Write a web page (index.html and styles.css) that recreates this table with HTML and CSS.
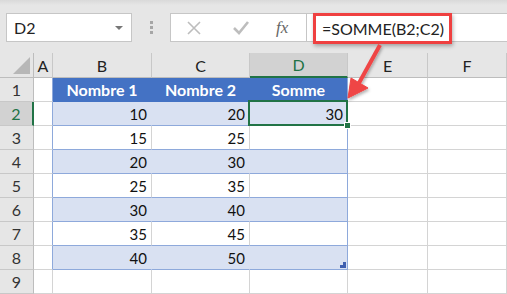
FILE: index.html
```html
<!DOCTYPE html>
<html lang="fr">

<head>
    <meta charset="UTF-8">
    <title>Somme</title>
    <link rel="stylesheet" href="styles.css">
</head>

<body>
    <div class="toolbar">
        <div class="name-box">
            <span>D2</span>
            <span class="drop"></span>
        </div>
        <div class="grip"><i></i><i></i><i></i></div>
        <div class="formula-bar">
            <div class="fx-buttons">
                <svg width="16" height="16" viewBox="0 0 16 16">
                    <path d="M2 2 L14 14 M14 2 L2 14" stroke="#bdbdbd" stroke-width="1.6" fill="none" />
                </svg>
                <svg width="18" height="16" viewBox="0 0 18 16">
                    <path d="M2 8 L7 13 L16 2" stroke="#bdbdbd" stroke-width="2.6" fill="none" />
                </svg>
                <span class="fx">fx</span>
            </div>
            <div class="formula">
                <span class="formula-text">=SOMME(B2;C2)</span>
            </div>
        </div>
    </div>

    <div id="sheet" class="sheet"></div>

    <svg class="arrow" width="507" height="294" viewBox="0 0 507 294">
        <defs>
            <filter id="shade" x="-20%" y="-20%" width="140%" height="140%">
                <feDropShadow dx="1" dy="2" stdDeviation="1.5" flood-color="#000" flood-opacity="0.3" />
            </filter>
        </defs>
        <g filter="url(#shade)" fill="#ef4545" stroke="#ef4545">
            <line x1="380" y1="45" x2="359" y2="83" stroke-width="4" />
            <polygon points="348,98 351,78 368,88" stroke-width="1" />
        </g>
    </svg>

    <script>
        const cols = ["", "A", "B", "C", "D", "E", "F"];
        const rows = [
            ["Nombre 1", "Nombre 2", "Somme"],
            [10, 20, 30],
            [15, 25, ""],
            [20, 30, ""],
            [25, 35, ""],
            [30, 40, ""],
            [35, 45, ""],
            [40, 50, ""],
            null
        ];
        const sheet = document.getElementById('sheet');

        function cell(text, cls) {
            const div = document.createElement("div");
            div.className = cls;
            div.textContent = text;
            sheet.append(div);
            return div;
        }

        cols.forEach((c, i) => {
            cell(c, i === 0 ? "corner" : (c === "D" ? "col-head active" : "col-head"));
        });

        rows.forEach((row, r) => {
            const n = r + 1;
            cell(n, n === 2 ? "row-head active" : "row-head");
            cell("", n <= 8 ? "cell col-a edge" : "cell col-a");
            for (let k = 0; k < 3; k++) {
                let cls = "cell";
                if (row) {
                    if (n === 1) cls += " tbl head";
                    else cls += n % 2 === 0 ? " tbl band" : " tbl";
                    if (k === 2) cls += " last";
                    if (n === 8) cls += " bottom";
                }
                const box = cell(row ? row[k] : "", cls);
                if (n === 2 && k === 2) box.classList.add("selected");
                if (n === 8 && k === 2) box.classList.add("resize");
            }
            cell("", "cell");
            cell("", "cell");
        });
    </script>
</body>

</html>
```

FILE: styles.css
```css
body {
    margin: 0;
    width: 507px;
    height: 294px;
    overflow: hidden;
    background-color: #fff;
    font-family: Lato, "Open Sans", sans-serif;
    position: relative;
}

.toolbar {
    height: 53px;
    box-sizing: border-box;
    padding: 13px 0 0 6px;
    display: flex;
    align-items: flex-start;
    background: linear-gradient(#d9d9d9, #e6e6e6 5px);
}

.name-box {
    width: 126px;
    height: 29px;
    box-sizing: border-box;
    background-color: #fff;
    border: 1px solid #c6c6c6;
    display: flex;
    align-items: center;
    justify-content: space-between;
    padding: 0 8px 0 7px;
    font-size: 16px;
    color: #222;
}

.drop {
    width: 0;
    height: 0;
    border-left: 4px solid transparent;
    border-right: 4px solid transparent;
    border-top: 4px solid #777;
}

.grip {
    width: 38px;
    height: 29px;
    display: flex;
    flex-direction: column;
    align-items: center;
    justify-content: center;
    gap: 2px;
}

.grip i {
    width: 3px;
    height: 3px;
    background-color: #a6a6a6;
}

.formula-bar {
    flex: 1;
    height: 29px;
    display: flex;
}

.fx-buttons {
    width: 137px;
    box-sizing: border-box;
    background-color: #fff;
    border: 1px solid #c6c6c6;
    display: flex;
    align-items: center;
    padding-left: 15px;
}

.fx-buttons svg:first-child {
    margin-right: 30px;
}

.fx-buttons svg:nth-child(2) {
    margin-right: 26px;
}

.fx {
    font-family: "Liberation Serif", serif;
    font-style: italic;
    font-size: 17px;
    color: #666;
}

.formula {
    flex: 1;
    background-color: #fff;
    border-top: 1px solid #c6c6c6;
    border-bottom: 1px solid #c6c6c6;
    position: relative;
}

.formula-text {
    position: absolute;
    left: 6px;
    top: -1px;
    width: 139px;
    height: 31px;
    box-sizing: border-box;
    border: 3px solid #ef4040;
    box-shadow: 1px 2px 4px rgba(0, 0, 0, 0.3);
    padding-left: 6px;
    font-size: 16px;
    line-height: 25px;
    color: #222;
    background-color: #fff;
}

.sheet {
    display: grid;
    grid-template-columns: 34px 19px 99px 98px 98px 80px 79px;
    grid-template-rows: 25px repeat(9, 24px);
    font-size: 15px;
}

.sheet > div {
    box-sizing: border-box;
    border-right: 1px solid #d4d4d4;
    border-bottom: 1px solid #d4d4d4;
    display: flex;
    align-items: center;
    white-space: nowrap;
}

.corner {
    background-color: #e6e6e6;
    border-color: #bdbdbd !important;
    position: relative;
}

.corner::after {
    content: "";
    position: absolute;
    right: 3px;
    bottom: 3px;
    border-left: 17px solid transparent;
    border-bottom: 17px solid #b7b7b7;
}

.col-head {
    background-color: #e6e6e6;
    justify-content: center;
    color: #222;
    font-size: 16px;
    border-bottom-color: #bdbdbd !important;
    border-right-color: #c8c8c8 !important;
}

.row-head {
    background-color: #e6e6e6;
    justify-content: center;
    color: #333;
    font-size: 16px;
    border-right-color: #bdbdbd !important;
    border-bottom-color: #c8c8c8 !important;
}

.col-head.active {
    background-color: #d2d2d2;
    color: #217346;
    border-bottom: 2px solid #217346 !important;
}

.row-head.active {
    background-color: #d2d2d2;
    color: #217346;
    border-right: 2px solid #217346 !important;
}

.cell {
    justify-content: flex-end;
    padding-right: 4px;
    color: #111;
}

.col-a.edge {
    border-right-color: #8ea9db !important;
}

.tbl {
    border-bottom-color: #8ea9db !important;
}

.tbl.band {
    background-color: #d9e1f2;
    border-right-color: #d9e1f2 !important;
}

.tbl.head {
    background-color: #4472c4;
    border-right-color: #4472c4 !important;
    border-bottom-color: #4472c4 !important;
    color: #fff;
    font-weight: bold;
    justify-content: center;
    padding-right: 0;
    font-size: 16px;
}

.tbl.last {
    border-right-color: #8ea9db !important;
}

.selected {
    position: relative;
}

.selected::after {
    content: "";
    position: absolute;
    left: -2px;
    top: -2px;
    right: -1px;
    bottom: -1px;
    border: 2px solid #217346;
}

.selected::before {
    content: "";
    position: absolute;
    right: -4px;
    bottom: -4px;
    width: 5px;
    height: 5px;
    background-color: #217346;
    border: 1px solid #fff;
    z-index: 1;
}

.resize {
    position: relative;
}

.resize::after {
    content: "";
    position: absolute;
    right: 1px;
    bottom: 1px;
    width: 6px;
    height: 6px;
    background: linear-gradient(to bottom, transparent 3px, #3f5fb0 3px),
        linear-gradient(to right, transparent 3px, #3f5fb0 3px);
    background-size: 6px 6px, 6px 3px;
    background-repeat: no-repeat;
}

.arrow {
    position: absolute;
    left: 0;
    top: 0;
    pointer-events: none;
}
```
